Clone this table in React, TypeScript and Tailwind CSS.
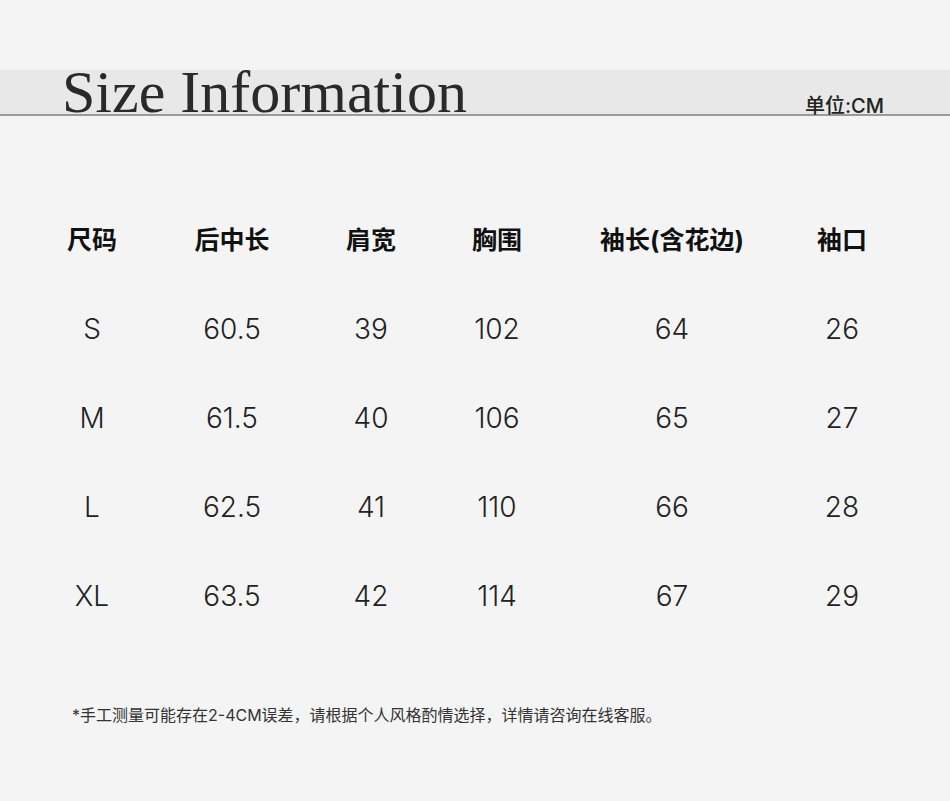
const cols = [
  { w: "w-[140px]" },
  { w: "w-[140px]" },
  { w: "w-[138px]" },
  { w: "w-[114px]" },
  { w: "w-[236px]" },
  { w: "w-[104px]" },
];

const headers = ["尺码", "后中长", "肩宽", "胸围", "袖长(含花边)", "袖口"];

const rows = [
  ["S", "60.5", "39", "102", "64", "26"],
  ["M", "61.5", "40", "106", "65", "27"],
  ["L", "62.5", "41", "110", "66", "28"],
  ["XL", "63.5", "42", "114", "67", "29"],
];

const cjk = "font-['Inter','Noto_Sans_CJK_SC',sans-serif]";

export default function App() {
  return (
    <div className={`h-[801px] w-[950px] overflow-hidden bg-[#f4f4f4] pt-[70px] ${cjk}`}>
      {/* title band */}
      <div className="flex h-[46px] items-end justify-between border-b-2 border-[#9a9a9a] bg-[#e8e8e8] pl-[62px] pr-[66px]">
        <h1 className="translate-y-[8px] font-['Liberation_Serif',serif] text-[60px] leading-none font-normal text-[#2a2a2a]">
          Size Information
        </h1>
        <span className="translate-y-[2px] text-[20px] leading-none font-medium text-[#222]">
          单位:CM
        </span>
      </div>

      {/* table */}
      <div className="mt-[81px] pl-[22px]">
        <div className="flex h-[87px] items-center">
          {headers.map((h, i) => (
            <div key={h} className={`${cols[i].w} text-center text-[25px] font-bold text-[#111]`}>
              {h}
            </div>
          ))}
        </div>
        {rows.map((r) => (
          <div key={r[0]} className="flex h-[89px] items-center">
            {r.map((v, i) => (
              <div key={i} className={`${cols[i].w} text-center text-[28px] font-light text-[#222]`}>
                {v}
              </div>
            ))}
          </div>
        ))}
      </div>

      <p className="mt-[63px] pl-[72px] text-[16px] text-[#333]">
        *手工测量可能存在2-4CM误差，请根据个人风格酌情选择，详情请咨询在线客服。
      </p>
    </div>
  );
}
